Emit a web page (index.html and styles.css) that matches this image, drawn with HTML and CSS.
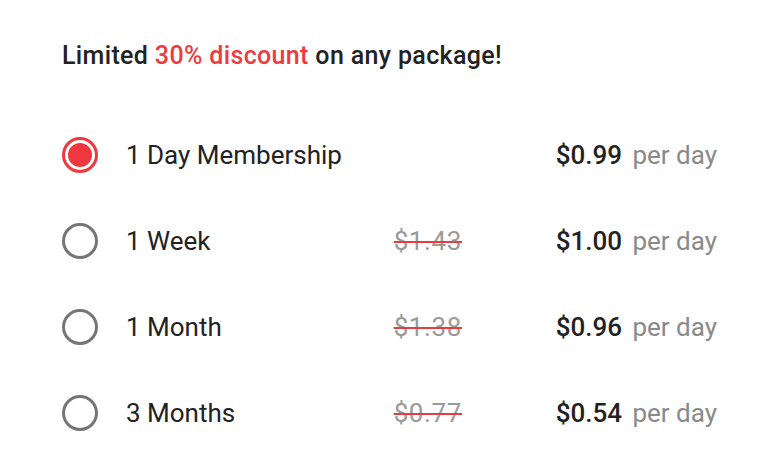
FILE: index.html
```html
<!DOCTYPE html>
<html lang="en">
<head>
    <meta charset="UTF-8">
    <meta name="viewport" content="width=device-width, initial-scale=1.0">
    <title>Membership Plans</title>
    <link rel="stylesheet" href="styles.css">
</head>
<body>
    <div class="container">
        <h1 class="promo">Limited <span class="accent">30% discount</span> on any package!</h1>
        <div class="plans">
            <label class="plan">
                <span class="radio checked"></span>
                <span class="name">1 Day Membership</span>
                <span class="old"></span>
                <span class="price"><b>$0.99</b> per day</span>
            </label>
            <label class="plan">
                <span class="radio"></span>
                <span class="name">1 Week</span>
                <span class="old"><s>$1.43</s></span>
                <span class="price"><b>$1.00</b> per day</span>
            </label>
            <label class="plan">
                <span class="radio"></span>
                <span class="name">1 Month</span>
                <span class="old"><s>$1.38</s></span>
                <span class="price"><b>$0.96</b> per day</span>
            </label>
            <label class="plan">
                <span class="radio"></span>
                <span class="name">3 Months</span>
                <span class="old"><s>$0.77</s></span>
                <span class="price"><b>$0.54</b> per day</span>
            </label>
        </div>
    </div>
</body>
</html>
```

FILE: styles.css
```css
body {
    font-family: Roboto, "Noto Sans", sans-serif;
    background-color: #fff;
    color: #222;
    margin: 0;
    padding: 0;
}
.container {
    width: 655px;
    padding: 40px 0 0 62px;
}
.promo {
    font-size: 25px;
    font-weight: 500;
    letter-spacing: 0.35px;
    margin: 0 0 40px;
    line-height: 32px;
    color: #222;
}
.accent {
    color: #ef3a40;
}
.plans {
    display: flex;
    flex-direction: column;
}
.plan {
    display: grid;
    grid-template-columns: 36px 1fr 164px auto;
    align-items: center;
    height: 86px;
    font-size: 26px;
}
.radio {
    width: 36px;
    height: 36px;
    box-sizing: border-box;
    border: 3px solid #757575;
    border-radius: 50%;
    position: relative;
}
.radio.checked {
    border-color: #f0373f;
}
.radio.checked::after {
    content: "";
    position: absolute;
    top: 3px;
    left: 3px;
    width: 24px;
    height: 24px;
    border-radius: 50%;
    background: #f0373f;
}
.name {
    padding-left: 28px;
}
.old {
    padding-left: 2px;
}
.old s {
    color: #9a9a9a;
    letter-spacing: 0.6px;
    text-decoration-color: #e53e42;
    text-decoration-thickness: 2px;
}
.price {
    color: #8a8a8a;
}
.price b {
    color: #222;
    font-weight: 500;
    margin-right: 4px;
}
```
